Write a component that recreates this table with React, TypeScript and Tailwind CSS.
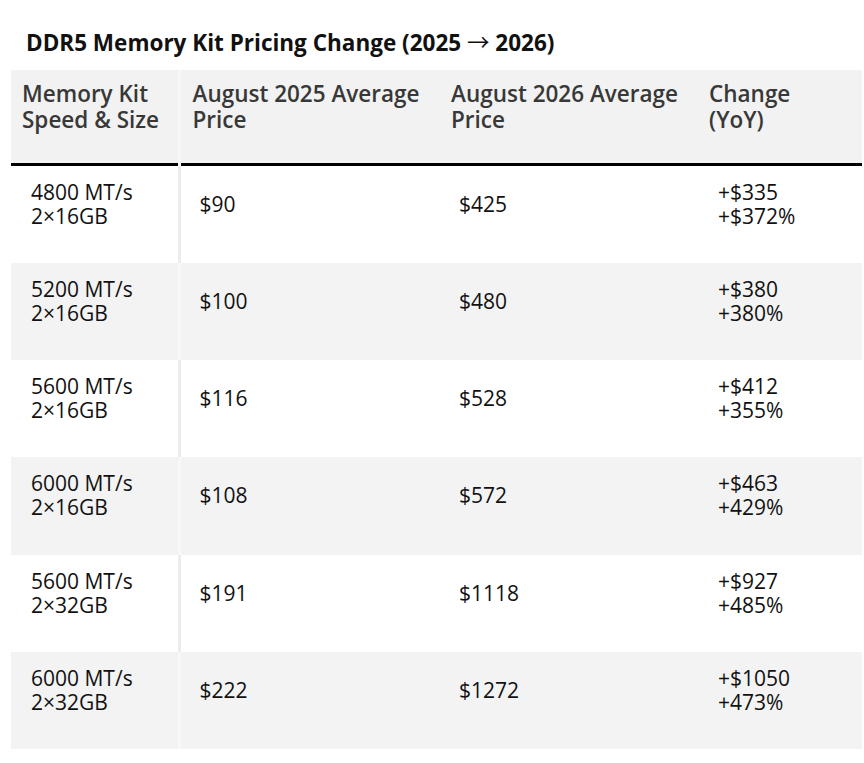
import React from "react";

interface Row {
  kit: [string, string];
  aug2025: string;
  aug2026: string;
  change: [string, string];
}

const rows: Row[] = [
  { kit: ["4800 MT/s", "2×16GB"], aug2025: "$90", aug2026: "$425", change: ["+$335", "+$372%"] },
  { kit: ["5200 MT/s", "2×16GB"], aug2025: "$100", aug2026: "$480", change: ["+$380", "+380%"] },
  { kit: ["5600 MT/s", "2×16GB"], aug2025: "$116", aug2026: "$528", change: ["+$412", "+355%"] },
  { kit: ["6000 MT/s", "2×16GB"], aug2025: "$108", aug2026: "$572", change: ["+$463", "+429%"] },
  { kit: ["5600 MT/s", "2×32GB"], aug2025: "$191", aug2026: "$1118", change: ["+$927", "+485%"] },
  { kit: ["6000 MT/s", "2×32GB"], aug2025: "$222", aug2026: "$1272", change: ["+$1050", "+473%"] },
];

const headers = [
  ["Memory Kit", "Speed & Size"],
  ["August 2025 Average", "Price"],
  ["August 2026 Average", "Price"],
  ["Change", "(YoY)"],
];

export default function App() {
  return (
    <div
      className="min-h-[763px] w-[864px] bg-white pl-[11px] pr-[2px] pt-[26px] text-black"
      style={{ fontFamily: '"Open Sans", "Noto Sans", sans-serif' }}
    >
      <h2 className="pl-[15px] text-[22.5px] font-bold leading-[30px] text-[#111]">
        DDR5 Memory Kit Pricing Change (2025{" "}
        <span
          className="font-normal"
          style={{ fontFamily: '"Noto Sans CJK SC", "DejaVu Sans", sans-serif' }}
        >
          →
        </span>{" "}
        2026)
      </h2>

      <table className="mt-[12px] w-[851px] table-fixed border-collapse">
        <colgroup>
          <col className="w-[168px]" />
          <col className="w-[260px]" />
          <col className="w-[258px]" />
          <col className="w-[165px]" />
        </colgroup>
        <thead>
          <tr className="h-[94px] border-b-[3px] border-black bg-[#f2f2f2]">
            {headers.map((h, i) => (
              <th
                key={i}
                className={
                  i === 0
                    ? "border-r-[3px] border-r-[#f7f7f7] pl-[11px] pt-[11px] text-left align-top text-[22.5px] font-semibold leading-[26px] text-[#383838]"
                    : "pl-[12px] pt-[11px] text-left align-top text-[22.5px] font-semibold leading-[26px] text-[#383838]"
                }
              >
                {h[0]}
                <br />
                {h[1]}
              </th>
            ))}
          </tr>
        </thead>
        <tbody>
          {rows.map((row, i) => {
            const gray = i % 2 === 1;
            return (
              <tr key={i} className={gray ? "h-[97.4px] bg-[#f3f3f3]" : "h-[97.4px] bg-white"}>
                <td
                  className={
                    gray
                      ? "border-r-[3px] border-r-[#f8f8f8] pb-[35px] pl-[20px] pt-[14px] align-middle text-[21px] leading-[24px] text-[#111]"
                      : "border-r-[3px] border-r-[#ececec] pb-[35px] pl-[20px] pt-[14px] align-middle text-[21px] leading-[24px] text-[#111]"
                  }
                >
                  {row.kit[0]}
                  <br />
                  {row.kit[1]}
                </td>
                <td className="pb-[35px] pl-[19px] pt-[14px] align-middle text-[21px] leading-[24px] text-[#111]">
                  {row.aug2025}
                </td>
                <td className="pb-[35px] pl-[20px] pt-[14px] align-middle text-[21px] leading-[24px] text-[#111]">
                  {row.aug2026}
                </td>
                <td className="pb-[35px] pl-[21px] pt-[14px] align-middle text-[21px] leading-[24px] text-[#111]">
                  {row.change[0]}
                  <br />
                  {row.change[1]}
                </td>
              </tr>
            );
          })}
        </tbody>
      </table>
    </div>
  );
}
